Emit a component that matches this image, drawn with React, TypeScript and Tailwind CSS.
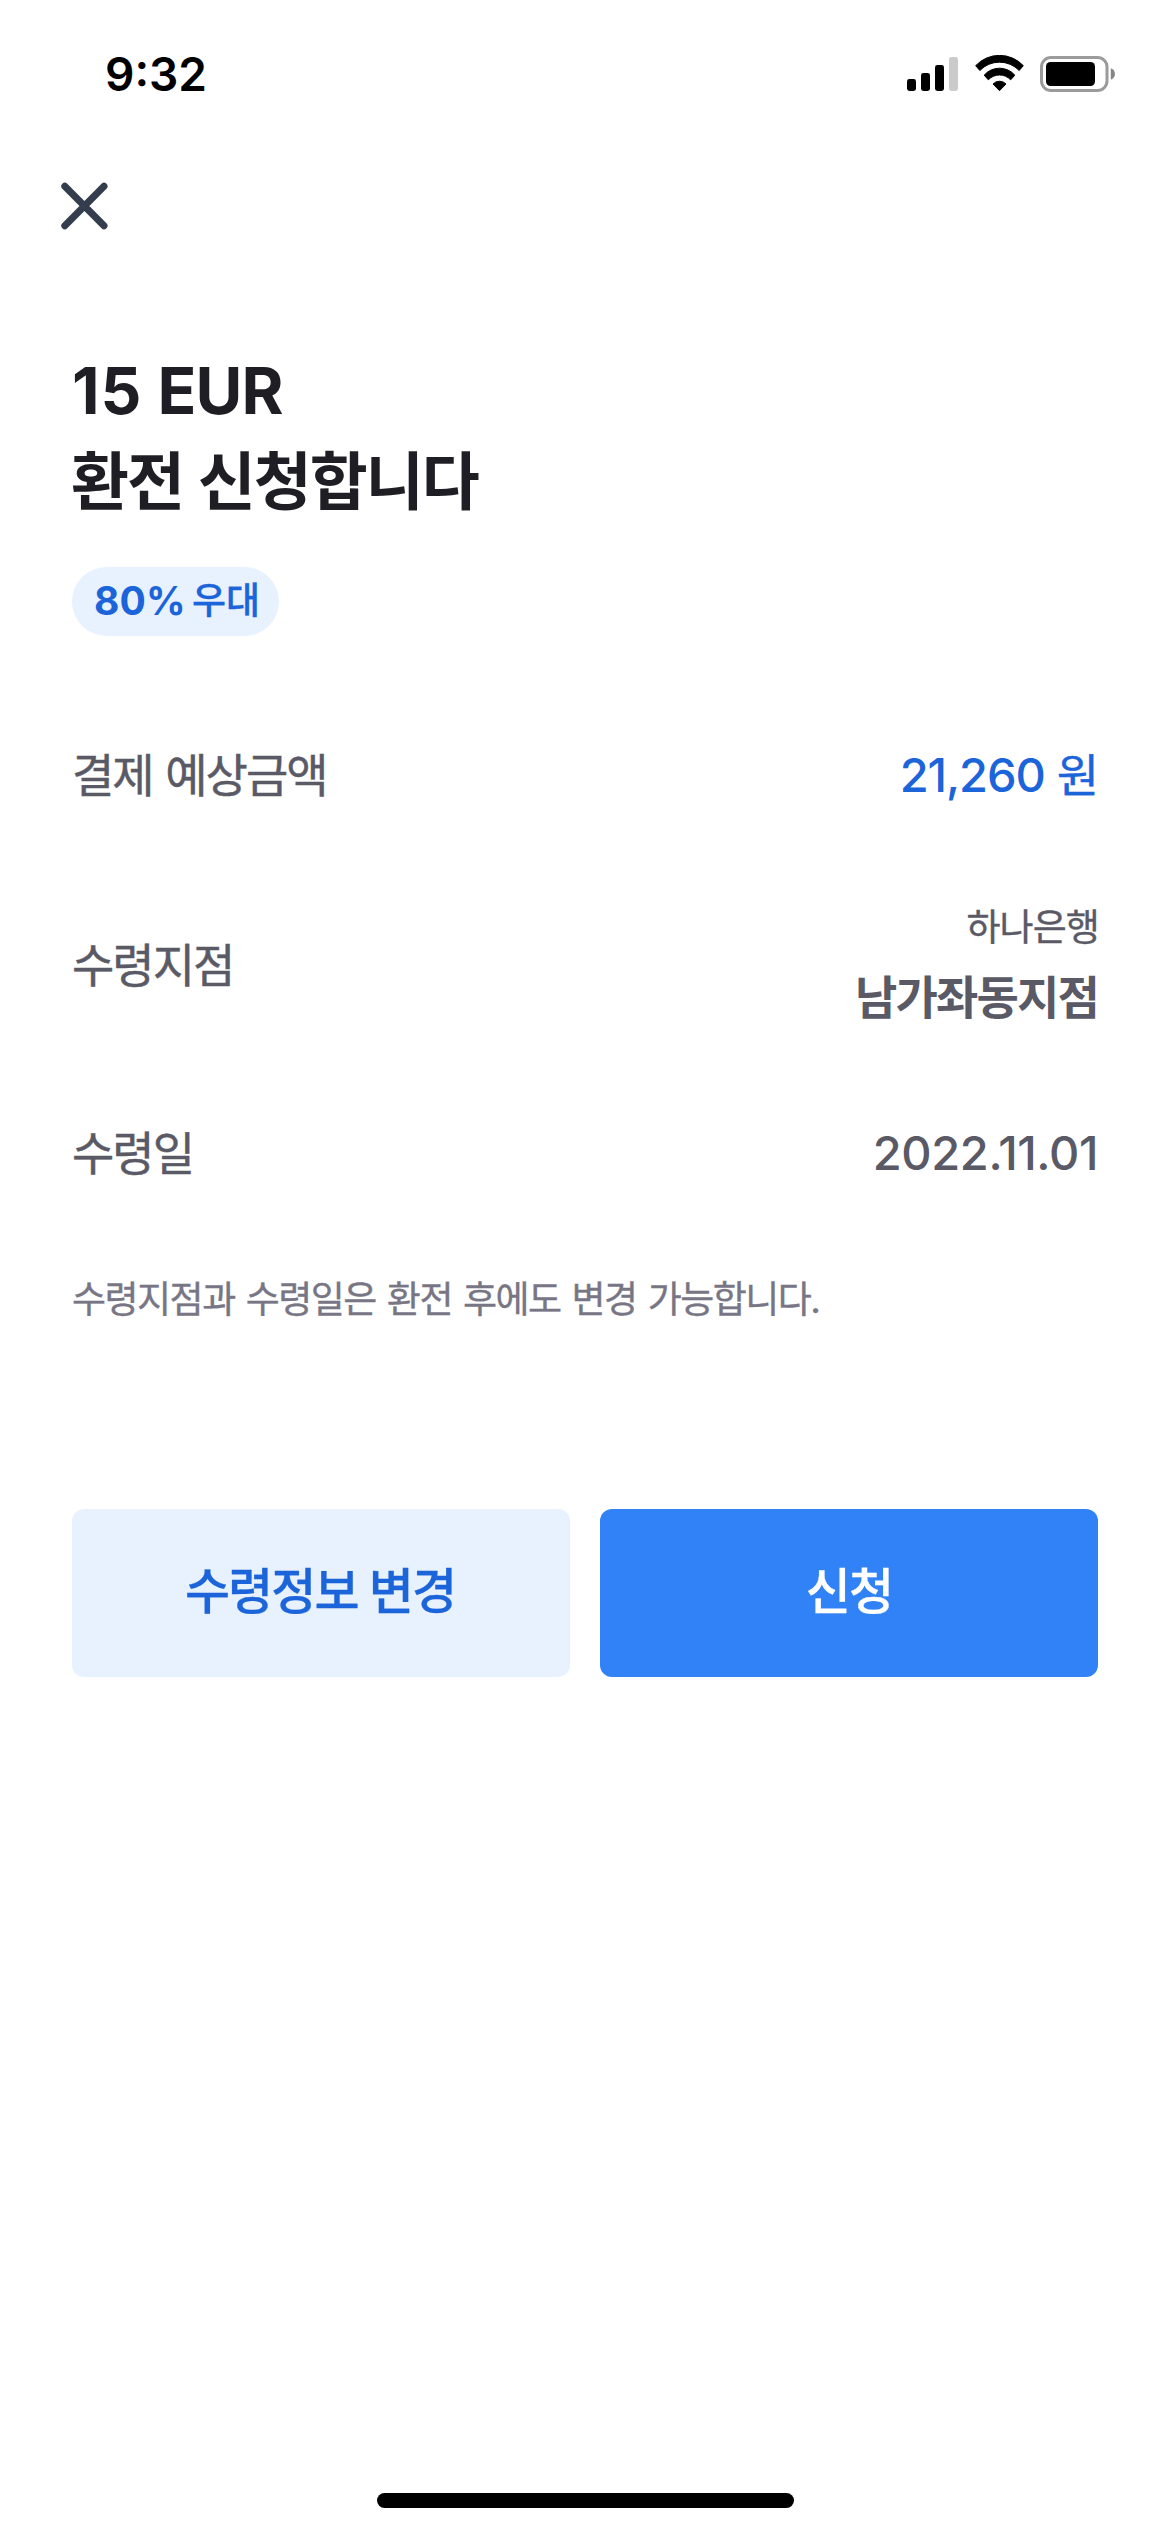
import type { ReactNode } from 'react';

function SignalIcon() {
  return (
    <svg width="51" height="34" viewBox="0 0 51 34">
      <rect x="0" y="22" width="9" height="12" rx="2.4" fill="#000" />
      <rect x="14" y="16" width="9" height="18" rx="2.4" fill="#000" />
      <rect x="28" y="8" width="9" height="26" rx="2.4" fill="#000" />
      <rect x="42" y="0" width="9" height="34" rx="2.4" fill="#cbcbcb" />
    </svg>
  );
}

function WifiIcon() {
  return (
    <svg width="49" height="37" viewBox="0 0 147 111" stroke="#000" strokeWidth="3" strokeLinejoin="round">
      <path d="M2 32 A98 98 0 0 1 145 32 L132.500 46.500 A82 82 0 0 0 14.500 46.500 Z" />
      <path d="M27.500 60.500 A61 61 0 0 1 119.500 60.500 L107 74.500 A46 46 0 0 0 40 74.500 Z" />
      <path d="M54 87 A27 27 0 0 1 93 87 L73.500 107 Z" />
    </svg>
  );
}

function BatteryIcon() {
  return (
    <svg width="75" height="36" viewBox="0 0 75 36">
      <rect x="1.500" y="1.500" width="65.500" height="33" rx="9.500" fill="none" stroke="#9b9b9b" strokeWidth="3" />
      <rect x="6" y="6" width="49" height="24" rx="4.500" fill="#000" />
      <path d="M70.800 12.300 C76.300 14.300 76.300 21.700 70.800 23.700 Z" fill="#858585" />
    </svg>
  );
}

function StatusBar() {
  return (
    <div className="flex h-[141px] items-start justify-between pt-11 pr-[55px] pl-[105px] text-black">
      <span className="text-[46px] leading-[60px] font-semibold">9:32</span>
      <div className="flex items-start pt-[11px]">
        <div className="pt-0.5">
          <SignalIcon />
        </div>
        <div className="ml-[17px]">
          <WifiIcon />
        </div>
        <div className="ml-4 pt-px">
          <BatteryIcon />
        </div>
      </div>
    </div>
  );
}

interface InfoRowProps {
  label: string;
  children: ReactNode;
}

function InfoRow({ label, children }: InfoRowProps) {
  return (
    <div className="flex items-center justify-between">
      <span className="text-[46px] leading-[60px] tracking-[-2px] [word-spacing:1.7px] [-webkit-text-stroke:0.45px]">
        {label}
      </span>
      {children}
    </div>
  );
}

export default function App() {
  return (
    <div className="flex h-[2532px] w-[1170px] flex-col bg-white whitespace-nowrap text-[#5a5966] font-['Inter','Noto_Sans_CJK_KR',sans-serif]">
      <StatusBar />

      <header className="h-[205px] pt-[41px] pl-[60px]">
        <button type="button" aria-label="닫기" className="block">
          <svg width="49" height="49" viewBox="0 0 49 49" stroke="#343d4d" strokeWidth="7" strokeLinecap="round">
            <path d="M4.800 4.300 L44 43.700 M44 4.300 L4.800 43.700" />
          </svg>
        </button>
      </header>

      <main className="flex flex-col px-[72px]">
        <h1 className="flex flex-col font-bold text-[#1f1e25]">
          <span className="flex gap-[15px] text-[64px] leading-[90px]">
            <span className="tracking-[1px]">15</span>
            <span className="tracking-[-0.8px]">EUR</span>
          </span>
          <span className="-ml-px text-[63px] leading-[90px] tracking-[-2px] [word-spacing:2px]">환전 신청합니다</span>
        </h1>

        <div className="mt-[41px] flex h-[69px] w-[207px] items-start rounded-full bg-[#e8f2fe] pl-[22px] font-bold text-[#1b64da]">
          <span className="text-[39px] leading-[67px] tracking-[0.2px]">80%</span>
          <span className="ml-1.5 text-[37px] leading-[67px] font-medium [-webkit-text-stroke:0.3px]">우대</span>
        </div>

        <section className="mt-[109px] flex flex-col">
          <InfoRow label="결제 예상금액">
            <div className="flex items-baseline gap-3 text-[#1b64da]">
              <span className="text-[47px] leading-[60px] font-medium tracking-[-1.1px]">21,260</span>
              <span className="-mr-px text-[46px] leading-[60px] [-webkit-text-stroke:0.45px]">원</span>
            </div>
          </InfoRow>
          <div className="mt-[98px]">
            <InfoRow label="수령지점">
              <div className="flex flex-col items-end">
                <span className="-mr-px text-[37px] leading-[50px] tracking-[-0.9px] [-webkit-text-stroke:0.35px]">하나은행</span>
                <span className="mt-3.5 text-[46px] leading-[60px] font-bold tracking-[-1.8px]">남가좌동지점</span>
              </div>
            </InfoRow>
          </div>
          <div className="mt-24">
            <InfoRow label="수령일">
              <span className="text-[47px] leading-[60px] font-medium tracking-[-0.4px]">2022.11.01</span>
            </InfoRow>
          </div>
        </section>

        <p className="mt-[92px] text-[37px] leading-[50px] tracking-[-1.5px] text-[#787684] [word-spacing:2.1px] [-webkit-text-stroke:0.35px]">
          수령지점과 수령일은 환전 후에도 변경 가능합니다.
        </p>

        <div className="mt-[184px] grid grid-cols-2 gap-[30px] text-[49px] leading-[165px] font-medium tracking-[-1.9px] [word-spacing:2.7px] [-webkit-text-stroke:0.3px]">
          <button type="button" className="h-[168px] rounded-xl bg-[#e8f2fe] pr-0.5 pb-[3px] text-[#1b64da]">
            수령정보 변경
          </button>
          <button type="button" className="h-[168px] rounded-xl bg-[#3182f7] pb-[3px] text-white">
            신청
          </button>
        </div>
      </main>

      <footer className="mt-auto flex justify-center pb-6">
        <div className="h-[15px] w-[417px] rounded-full bg-black" />
      </footer>
    </div>
  );
}
